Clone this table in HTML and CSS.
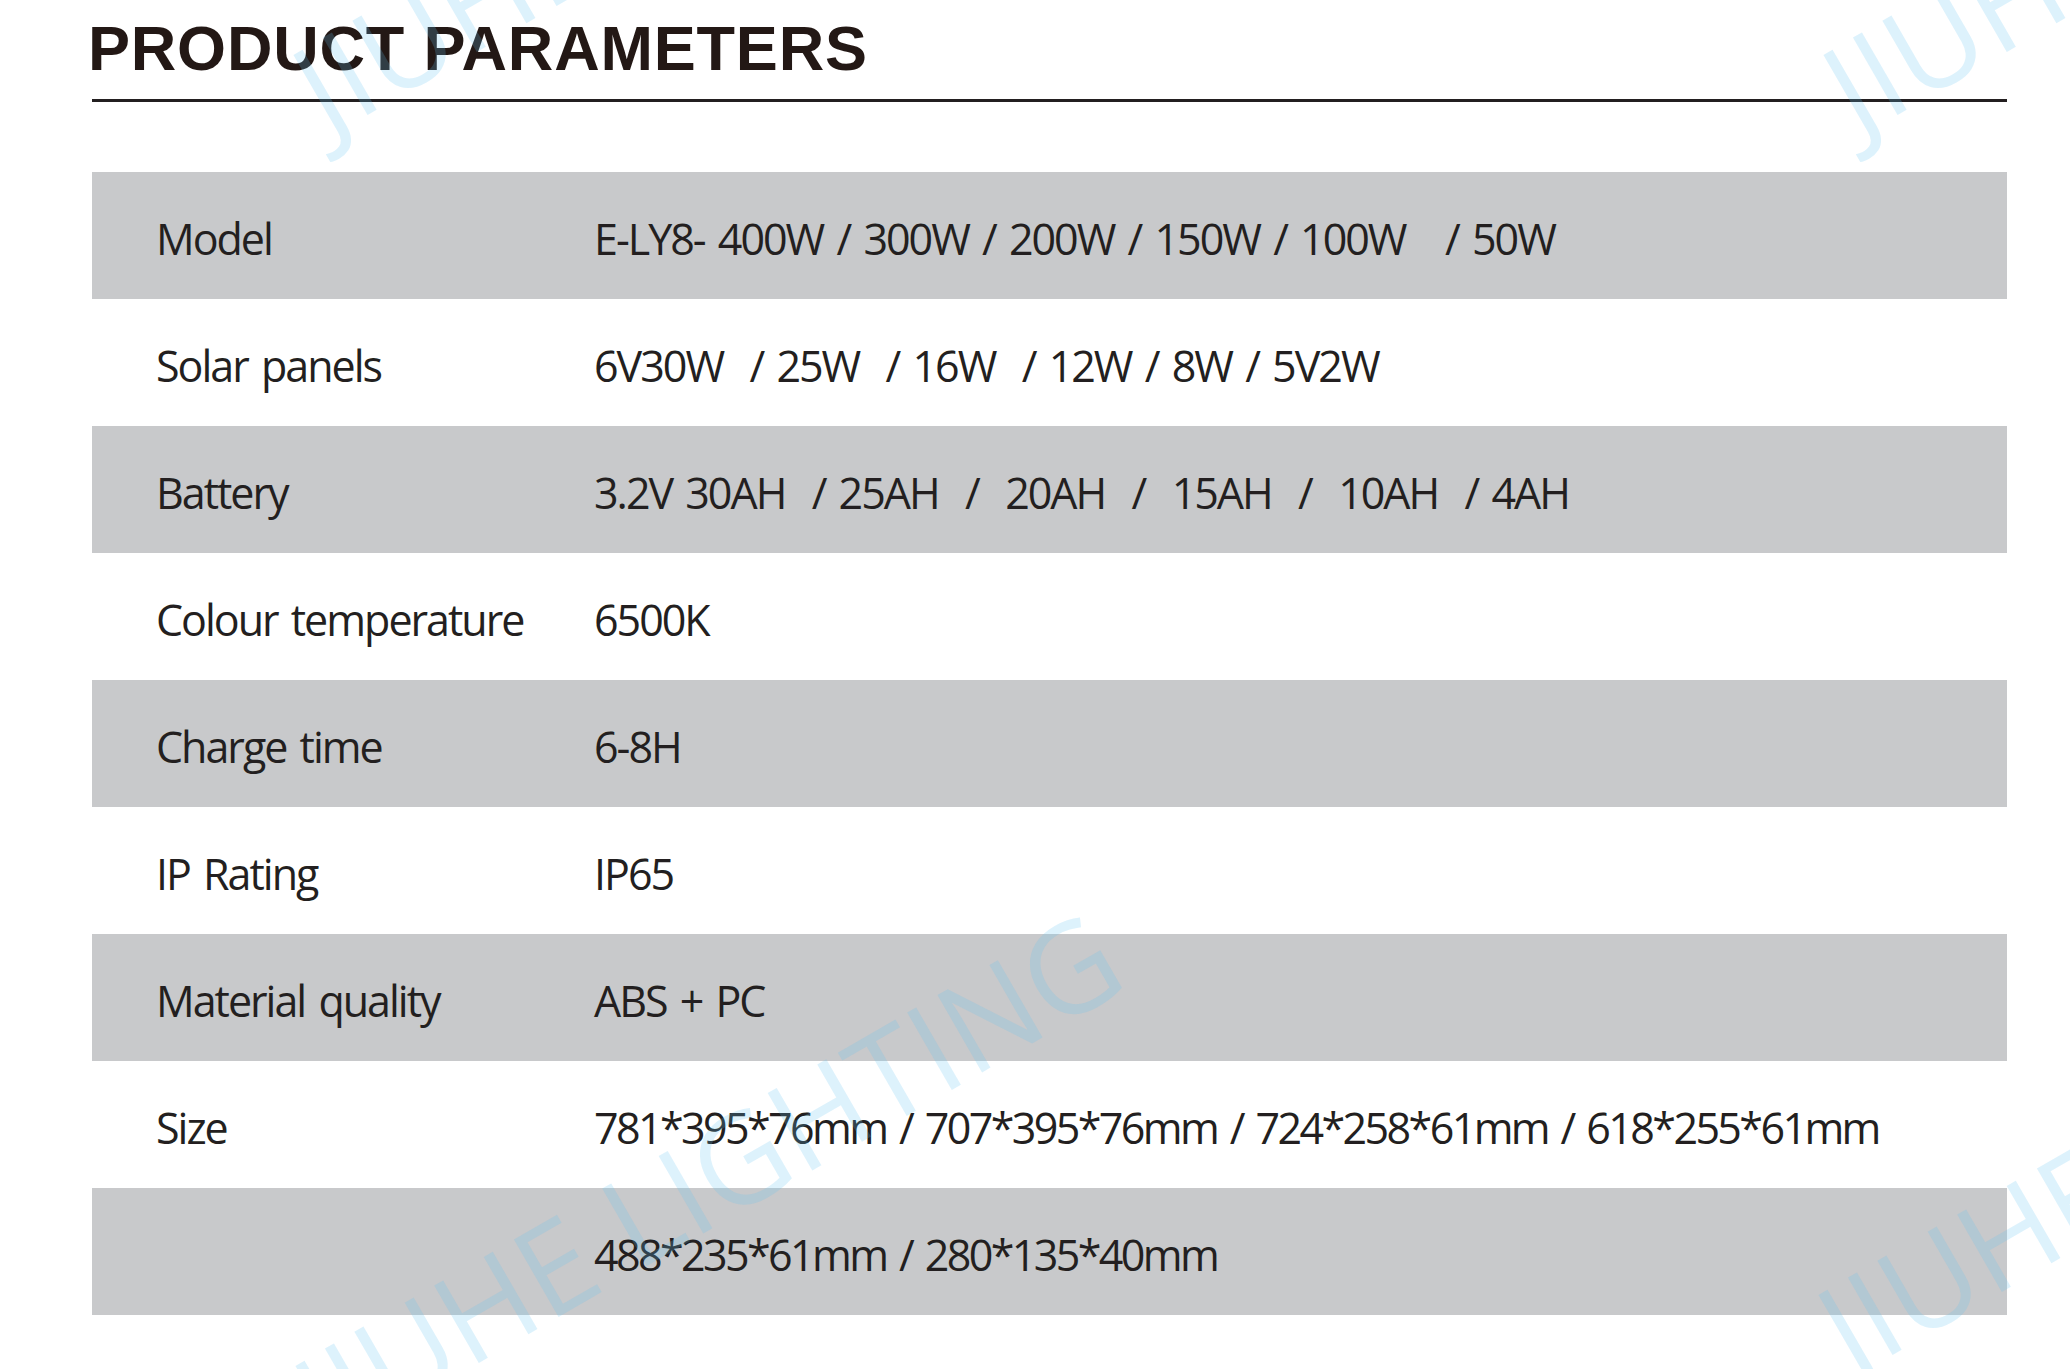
FILE: index.html
```html
<!DOCTYPE html>
<html lang="en">
<head>
<meta charset="utf-8">
<title>Product Parameters</title>
<link rel="stylesheet" href="styles.css">
</head>
<body>
<div class="page">
  <h1 class="title">PRODUCT PARAMETERS</h1>
  <div class="rule"></div>
  <div class="params">
    <div class="row shade"><div class="label">Model</div><div class="value">E-LY8- 400W / 300W / 200W / 150W / 100W   / 50W</div></div>
    <div class="row"><div class="label">Solar panels</div><div class="value">6V30W  / 25W  / 16W  / 12W / 8W / 5V2W</div></div>
    <div class="row shade"><div class="label">Battery</div><div class="value">3.2V 30AH  / 25AH  /  20AH  /  15AH  /  10AH  / 4AH</div></div>
    <div class="row"><div class="label">Colour temperature</div><div class="value">6500K</div></div>
    <div class="row shade"><div class="label">Charge time</div><div class="value">6-8H</div></div>
    <div class="row"><div class="label">IP Rating</div><div class="value">IP65</div></div>
    <div class="row shade"><div class="label">Material quality</div><div class="value">ABS + PC</div></div>
    <div class="row"><div class="label">Size</div><div class="value dims">781*395*76mm / 707*395*76mm / 724*258*61mm / 618*255*61mm</div></div>
    <div class="row shade"><div class="label"></div><div class="value dims">488*235*61mm / 280*135*40mm</div></div>
  </div>
  <span class="wm wm-a">JIUHE LIGHTING</span>
  <span class="wm wm-b">JIUHE LIGHTING</span>
  <span class="wm wm-c">JIUHE LIGHTING</span>
  <span class="wm wm-d">JIUHE LIGHTING</span>
</div>
</body>
</html>
```
FILE: styles.css
```css
html, body {
  margin: 0;
  padding: 0;
  background: #ffffff;
  overflow: hidden;
}

.page {
  position: relative;
  width: 2070px;
  height: 1369px;
  overflow: hidden;
  box-sizing: border-box;
  padding: 17px 63px 0 92px;
  background: #ffffff;
}

.title {
  margin: 0 0 19px -4px;
  font-family: "Liberation Sans", Arial, sans-serif;
  font-weight: 700;
  font-size: 63px;
  line-height: 63px;
  letter-spacing: 0.8px;
  color: #231815;
}

.rule {
  height: 3px;
  background: #231f20;
  margin-bottom: 70px;
}

.params {
  display: flex;
  flex-direction: column;
}

.row {
  box-sizing: border-box;
  height: 127px;
  display: grid;
  grid-template-columns: 438px 1fr;
  align-items: center;
  padding: 6px 0 0 64px;
  font-family: "Open Sans", "Noto Sans", sans-serif;
  font-size: 43px;
  letter-spacing: -2px;
  word-spacing: 4px;
  color: #231f20;
}

.row.shade {
  background: #c8c9cb;
}

.label,
.value {
  white-space: pre;
}

.value.dims {
  letter-spacing: -2.6px;
}

.wm {
  position: absolute;
  font-family: "Open Sans", sans-serif;
  font-weight: 400;
  font-size: 125px;
  line-height: 125px;
  color: rgba(100, 195, 240, 0.22);
  white-space: nowrap;
  transform-origin: 0 100%;
  transform: rotate(-30deg);
  pointer-events: none;
}

.wm-a { left: 335px; top: 25px; }
.wm-b { left: 1865px; top: 25px; }
.wm-c { left: 337px; top: 1336px; }
.wm-d { left: 1860px; top: 1265px; }
```
